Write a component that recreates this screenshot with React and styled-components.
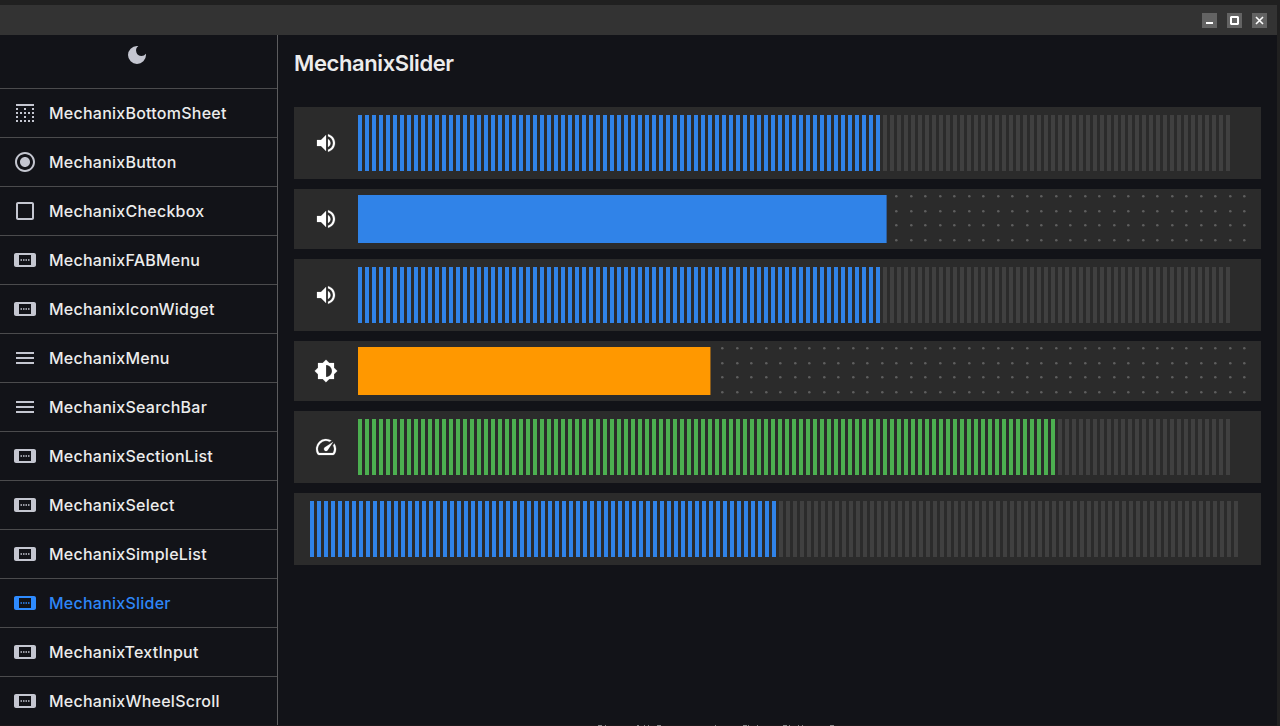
import React from "react";
import styled, { createGlobalStyle } from "styled-components";
import {
  MdBorderTop,
  MdRadioButtonChecked,
  MdCheckBoxOutlineBlank,
  MdMenu,
  MdDarkMode,
  MdVolumeUp,
  MdBrightness6,
  MdOutlineSpeed,
  MdSmartScreen,
} from "react-icons/md";

const GlobalStyle = createGlobalStyle`
  * { box-sizing: border-box; }
  body { margin: 0; background: #202020; overflow: hidden; }
`;

const Desktop = styled.div`
  width: 1280px;
  height: 726px;
  padding: 5px 3px 0 0;
  background: #202020;
  font-family: Inter, "Liberation Sans", sans-serif;
  color: #ececec;
`;

const Window = styled.div`
  display: flex;
  flex-direction: column;
  height: 720px;
  background: #121318;
`;

const TitleBar = styled.header`
  flex: none;
  height: 30px;
  display: flex;
  align-items: center;
  justify-content: flex-end;
  gap: 10px;
  padding-right: 10px;
  padding-top: 1px;
  background: #333333;
`;

const WindowButton = styled.button`
  width: 15px;
  height: 15px;
  padding: 0;
  border: 0;
  background: #636363;
  display: flex;
  svg { display: block; }
`;

const Body = styled.div`
  flex: 1;
  min-height: 0;
  display: flex;
`;

const Sidebar = styled.nav`
  flex: none;
  width: 278px;
  border-right: 1px solid #5c5c5e;
  overflow: hidden;
`;

const ThemeToggle = styled.div`
  height: 54px;
  padding: 8px 3px 0 0;
  display: flex;
  justify-content: center;
  border-bottom: 1px solid #4b4b4d;
  color: #c4c6d0;
`;

const NavItem = styled.a`
  display: flex;
  align-items: center;
  gap: 12px;
  height: 49px;
  padding-left: 13px;
  border-bottom: 1px solid #4b4b4d;
  color: ${(p) => (p.$active ? "#2e86f7" : "#ececec")};
  font-size: 16px;
  font-weight: 500;
  letter-spacing: 0.24px;
  svg { flex: none; color: ${(p) => (p.$active ? "#2e8bff" : "#c4c6d0")}; }
`;

const Content = styled.main`
  flex: 1;
  padding: 14px 16px 0;
`;

const Title = styled.h1`
  margin: 0 0 30px;
  font-size: 22px;
  line-height: 28px;
  font-weight: 600;
  letter-spacing: -0.4px;
`;

const SliderList = styled.div`
  display: flex;
  flex-direction: column;
  gap: 10px;
`;

const SliderRow = styled.div`
  display: flex;
  align-items: center;
  height: ${(p) => (p.$solid ? 60 : 72)}px;
  padding-left: ${(p) => (p.$plain ? 16 : 20)}px;
  background: #2b2b2b;
  > svg {
    flex: none;
    margin-right: 20px;
    color: #ffffff;
    stroke-width: 0.2;
  }
  > svg [fill="none"] { stroke: none; }
`;

const Bars = styled.div`
  display: flex;
  gap: 3px;
`;

const Bar = styled.i`
  width: 4px;
  height: 56px;
  background: ${(p) => p.$color};
`;

const Track = styled.div`
  display: flex;
  width: 889px;
  height: 48px;
`;

const Fill = styled.div`
  flex: none;
  width: ${(p) => p.$width}px;
  background: ${(p) => p.$color};
  border-right: 1px solid ${(p) => p.$edge};
`;

const DotArea = styled.svg`
  display: block;
  flex: none;
`;

const DesktopEdge = styled.svg`
  display: block;
`;

const NAV = [
  ["MechanixBottomSheet", MdBorderTop],
  ["MechanixButton", MdRadioButtonChecked],
  ["MechanixCheckbox", MdCheckBoxOutlineBlank],
  ["MechanixFABMenu", MdSmartScreen],
  ["MechanixIconWidget", MdSmartScreen],
  ["MechanixMenu", MdMenu],
  ["MechanixSearchBar", MdMenu],
  ["MechanixSectionList", MdSmartScreen],
  ["MechanixSelect", MdSmartScreen],
  ["MechanixSimpleList", MdSmartScreen],
  ["MechanixSlider", MdSmartScreen],
  ["MechanixTextInput", MdSmartScreen],
  ["MechanixWheelScroll", MdSmartScreen],
];

function BarSlider({ icon: Icon, color, filled, total = 125 }) {
  return (
    <SliderRow $plain={!Icon}>
      {Icon && <Icon size={24} />}
      <Bars>
        {Array.from({ length: total }, (_, i) => (
          <Bar key={i} $color={i < filled ? color : "#404040"} />
        ))}
      </Bars>
    </SliderRow>
  );
}

const TRACK_WIDTH = 889;
const DOT_END = 886;
const DOT_STEP = 14.5;

function SolidSlider({ icon: Icon, color, edge, width, dots }) {
  const xs = Array.from(
    { length: dots },
    (_, i) => Math.round(DOT_END - (dots - 1 - i) * DOT_STEP) - width
  );
  return (
    <SliderRow $solid>
      <Icon size={24} />
      <Track>
        <Fill $color={color} $edge={edge} $width={width} />
        <DotArea width={TRACK_WIDTH - width} height="48">
          {[1, 16, 30, 45].map((y) =>
            xs.map((x) => (
              <circle key={`${x}-${y}`} cx={x + 0.3} cy={y + 0.3} r="1.3" fill="#5e5e5e" />
            ))
          )}
        </DotArea>
      </Track>
    </SliderRow>
  );
}

export default function App() {
  return (
    <Desktop>
      <GlobalStyle />
      <Window>
        <TitleBar>
          <WindowButton aria-label="Minimize">
            <svg width="15" height="15"><path d="M4 9h7v2H4z" fill="#fff" /></svg>
          </WindowButton>
          <WindowButton aria-label="Maximize">
            <svg width="15" height="15">
              <path
                fill="#fff"
                fillRule="evenodd"
                d="M4 3h7l1 1v7l-1 1H4l-1-1V4zM5 5v5h5V5z"
              />
            </svg>
          </WindowButton>
          <WindowButton aria-label="Close">
            <svg width="15" height="15">
              <path d="M4 4l7 7M11 4l-7 7" stroke="#fff" strokeWidth="1.6" />
            </svg>
          </WindowButton>
        </TitleBar>
        <Body>
          <Sidebar>
            <ThemeToggle><MdDarkMode size={24} /></ThemeToggle>
            {NAV.map(([label, Icon]) => (
              <NavItem key={label} $active={label === "MechanixSlider"}>
                <Icon size={24} />
                {label}
              </NavItem>
            ))}
          </Sidebar>
          <Content>
            <Title>MechanixSlider</Title>
            <SliderList>
              <BarSlider icon={MdVolumeUp} color="#3083e8" filled={75} />
              <SolidSlider icon={MdVolumeUp} color="#3083e8" edge="#2e5f9f" width={529} dots={25} />
              <BarSlider icon={MdVolumeUp} color="#3083e8" filled={75} />
              <SolidSlider icon={MdBrightness6} color="#ff9800" edge="#8a5b1a" width={353} dots={37} />
              <BarSlider icon={MdOutlineSpeed} color="#4caf50" filled={100} />
              <BarSlider color="#3083e8" filled={67} total={133} />
            </SliderList>
          </Content>
        </Body>
      </Window>
      <DesktopEdge width="1277" height="1">
        <rect width="1277" height="1" fill="#1c171a" />
        <path
          d="M598 .5h4M605 .5h1M637 .5h2M644 .5h1M648 .5h1M657 .5h4M715 .5h1M743 .5h4M748 .5h1M757 .5h1M783 .5h4M789 .5h1M798 .5h1M802 .5h1M830 .5h4"
          stroke="#858585"
        />
      </DesktopEdge>
    </Desktop>
  );
}
